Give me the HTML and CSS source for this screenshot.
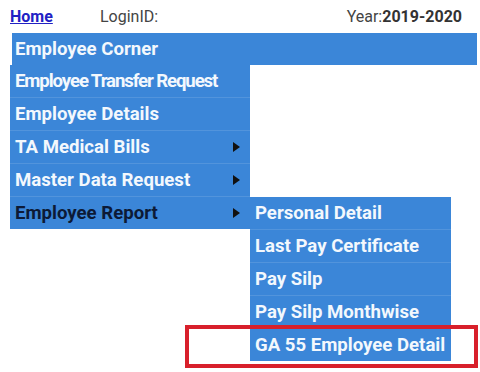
FILE: index.html
```html
<!DOCTYPE html>
<html lang="en">
  <head>
    <meta charset="UTF-8" />
    <meta name="viewport" content="width=device-width, initial-scale=1.0" />
    <title>Employee Corner</title>
    <link rel="stylesheet" href="styles.css">
  </head>
  <body>
    <!-- Top bar -->
    <div class="header">
      <a href="#" class="home-link">Home</a>
      <span class="login">LoginID:</span>
      <span class="year">Year:<b>2019-2020</b></span>
    </div>

    <!-- Menu bar -->
    <div class="menubar">
      <a href="#">Employee Corner</a>
    </div>

    <!-- Opened menus -->
    <div class="menu-area">
      <ul class="dropdown">
        <li><a href="#" class="tight">Employee Transfer Request</a></li>
        <li><a href="#">Employee Details</a></li>
        <li><a href="#">TA Medical Bills<span class="arrow"></span></a></li>
        <li><a href="#">Master Data Request<span class="arrow"></span></a></li>
        <li class="active"><a href="#">Employee Report<span class="arrow"></span></a></li>
      </ul>
      <ul class="submenu">
        <li><a href="#">Personal Detail</a></li>
        <li><a href="#">Last Pay Certificate</a></li>
        <li><a href="#">Pay Silp</a></li>
        <li><a href="#">Pay Silp Monthwise</a></li>
        <li><a href="#">GA 55 Employee Detail</a></li>
      </ul>
    </div>

    <!-- Highlight box -->
    <div class="highlight"></div>
  </body>
</html>
```

FILE: styles.css
```css
/* Basic reset for body */
body,
html {
  margin: 0;
  padding: 0;
  font-family: Roboto, "Liberation Sans", Arial, sans-serif;
  background: #fff;
}

/* Top bar */
.header {
  display: flex;
  align-items: center;
  height: 33px;
  padding: 0 18px 0 10px;
  font-size: 16px;
  color: #444;
}

.home-link {
  color: #2121c4;
  font-weight: bold;
  text-decoration: underline;
  width: 90px;
}

.login {
  flex: 1;
}

.year b {
  color: #333;
}

ul {
  list-style: none;
  margin: 0;
  padding: 0;
}

.menubar a,
.menu-area a {
  display: flex;
  align-items: center;
  height: 32px;
  white-space: nowrap;
  text-decoration: none;
  color: #f3f8fd;
  font-weight: bold;
  font-size: 18.6px;
}

/* Menu bar */
.menubar {
  margin-left: 12px;
  width: 465px;
  background-color: #3b86d8;
}

.menubar a {
  padding-left: 3px;
}

/* Opened menus */
.menu-area {
  display: flex;
  align-items: flex-start;
  margin-left: 10px;
}

.dropdown,
.submenu {
  background-color: #3b86d8;
}

.dropdown li + li,
.submenu li + li {
  border-top: 1px solid rgba(255, 255, 255, 0.12);
}

.dropdown {
  width: 240px;
}

.dropdown a {
  padding: 0 10px 0 5px;
}

.dropdown a.tight {
  padding-right: 0;
  letter-spacing: -1.1px;
}

.arrow {
  margin-left: auto;
  width: 0;
  height: 0;
  border-top: 5px solid transparent;
  border-bottom: 5px solid transparent;
  border-left: 7px solid #111;
}

.dropdown .active a {
  color: #0c1a36;
}

.submenu {
  width: 201px;
  margin-top: 132px; /* lines up with Employee Report */
}

.submenu a {
  padding-left: 5px;
}

/* Red highlight */
.highlight {
  position: absolute;
  left: 185px;
  top: 325px;
  width: 285px;
  height: 35px;
  border: 4px solid #d8202b;
}
```
